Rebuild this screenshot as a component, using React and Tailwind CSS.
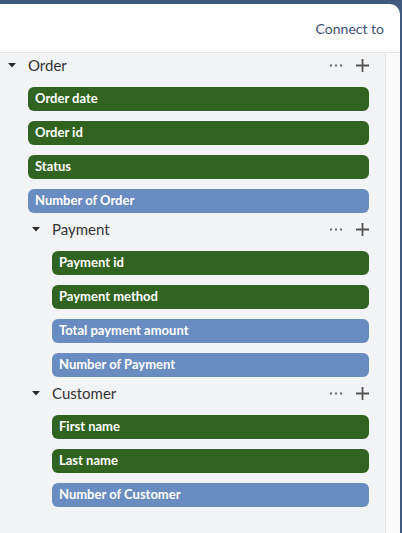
import React from 'react'

const GREEN = 'green'
const BLUE = 'blue'

const sections = [
  {
    name: 'Order',
    fields: [
      ['Order date', GREEN],
      ['Order id', GREEN],
      ['Status', GREEN],
      ['Number of Order', BLUE],
    ],
    children: [
      {
        name: 'Payment',
        fields: [
          ['Payment id', GREEN],
          ['Payment method', GREEN],
          ['Total payment amount', BLUE],
          ['Number of Payment', BLUE],
        ],
      },
      {
        name: 'Customer',
        fields: [
          ['First name', GREEN],
          ['Last name', GREEN],
          ['Number of Customer', BLUE],
        ],
      },
    ],
  },
]

function Caret() {
  return (
    <svg width="8" height="5" viewBox="0 0 8 5" className="shrink-0">
      <path d="M0 0 L8 0 L4 4.5 Z" fill="#2b2b2b" />
    </svg>
  )
}

function Dots() {
  return (
    <svg width="12" height="3" viewBox="0 0 12 3">
      <rect x="0" y="0.5" width="2" height="2" fill="#666" />
      <rect x="5" y="0.5" width="2" height="2" fill="#666" />
      <rect x="10" y="0.5" width="2" height="2" fill="#666" />
    </svg>
  )
}

function Plus() {
  return (
    <svg width="13" height="13" viewBox="0 0 13 13">
      <path d="M6.5 0 V13 M0 6.5 H13" stroke="#555" strokeWidth="1.8" />
    </svg>
  )
}

function Pill({ label, kind }) {
  return (
    <div
      className={`h-6 rounded-[6px] pl-[7px] flex items-center text-white font-bold text-[13px] ${
        kind === GREEN ? 'bg-[#316420]' : 'bg-[#6a8dc1]'
      }`}
    >
      {label}
    </div>
  )
}

function Section({ section, nested }) {
  return (
    <div className={nested ? 'mt-1 pl-6' : ''}>
      <div className="h-6 flex items-center">
        <div className="w-7 shrink-0 flex items-center pl-2">
          <Caret />
        </div>
        <span className="flex-1 text-[15px] text-[#333]">{section.name}</span>
        <div className="flex items-center gap-[14px]">
          <Dots />
          <Plus />
        </div>
      </div>
      <div className="mt-[10px] flex flex-col gap-[10px] pl-7">
        {section.fields.map(([label, kind]) => (
          <Pill key={label} label={label} kind={kind} />
        ))}
      </div>
      {section.children && section.children.map(c => (
        <Section key={c.name} section={c} nested />
      ))}
    </div>
  )
}

export default function App() {
  return (
    <div className="w-[402px] h-[533px] bg-[#42597e] pt-1 pr-[2px] overflow-hidden" style={{ fontFamily: 'Lato, "Open Sans", sans-serif' }}>
      <div className="h-full bg-white rounded-tr-[10px] flex flex-col overflow-hidden">
        {/* header */}
        <div className="h-[49px] shrink-0 flex items-center justify-end pr-[16px] border-b border-[#e3e5e9]">
          <span className="text-[14px] text-[#3e5075]">Connect to</span>
        </div>

        {/* tree */}
        <div className="flex-1 flex">
          <div className="w-[386px] bg-[#f3f4f6] pr-4 border-r border-[#e4e5e8]">
            {sections.map(s => (
              <Section key={s.name} section={s} />
            ))}
          </div>
          <div className="flex-1 bg-[#fafafa]" />
        </div>
      </div>
    </div>
  )
}
